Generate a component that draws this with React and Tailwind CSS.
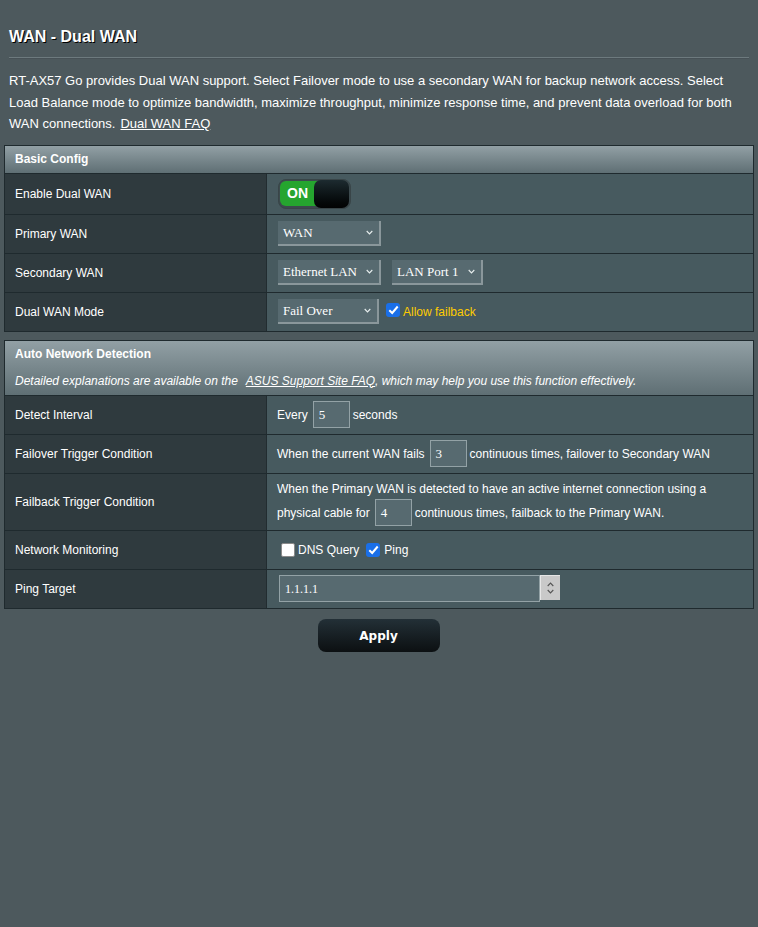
import React from "react";

const Chevron = ({ className = "", color = "#e8eeee" }) => (
  <svg width="7" height="5" viewBox="0 0 7 5" fill="none" stroke={color} strokeWidth="1.1" className={className}>
    <path d="M0.7 1 L3.5 3.9 L6.3 1" />
  </svg>
);

const Select = ({ label, width }) => (
  <div
    className={`flex h-[25px] items-center justify-between border-r-2 border-b-2 border-[#8a979b] bg-[#576a70] pl-[5px] pr-[6px] font-['Liberation_Serif',serif] text-[13px] text-white ${width}`}
  >
    <span>{label}</span>
    <Chevron />
  </div>
);

const NumBox = ({ value }) => (
  <div className="ml-[5px] mr-[3px] flex h-[27px] w-[37px] items-center border border-[#93a2a6] bg-[#576a70] pl-[5px] font-['Liberation_Serif',serif] text-[13px] text-white">
    {value}
  </div>
);

const Check = ({ checked }) =>
  checked ? (
    <div className="flex h-[14px] w-[14px] items-center justify-center rounded-[3px] bg-[#1a6fe8]">
      <svg width="11" height="10" viewBox="0 0 11 10" fill="none" stroke="#fff" strokeWidth="2">
        <path d="M1.3 5.2 L4.2 8 L9.7 1.5" />
      </svg>
    </div>
  ) : (
    <div className="h-[14px] w-[14px] rounded-[2px] border border-[#8a8a8a] bg-white" />
  );

const Row = ({ label, h = "h-[39px]", children }) => (
  <div className={`flex border-t border-[#1f2a2e] ${h}`}>
    <div className="flex w-[261px] shrink-0 items-center bg-[#2f3a3e] pl-[10px] text-[12px] text-white">
      {label}
    </div>
    <div className="flex min-w-0 flex-1 items-center border-l border-[#222c30] bg-[#475a5f] pl-[10px] text-[12px] text-white">
      {children}
    </div>
  </div>
);

const HeaderBar = ({ children }) => (
  <div className="bg-gradient-to-b from-[#92a0a5] to-[#5f6f74] pl-[10px] text-[12px] font-bold text-white">
    {children}
  </div>
);

export default function App() {
  return (
    <div className="min-h-[927px] bg-[#4d595d] font-['Liberation_Sans',sans-serif] text-white">
      <div className="px-[4px] pt-[27px]">
        <div className="px-[5px]">
          <h1 className="text-[16px] font-bold leading-[19px] [text-shadow:1px_1px_0_#000]">WAN - Dual WAN</h1>
          <div className="mt-[11px] h-[2px] w-[740px] border-t border-[#6d7a7e] bg-[#475156]" />
          <div className="mt-[11px] w-[740px] text-[13px] leading-[21.5px]">
            <div>RT-AX57 Go provides Dual WAN support. Select Failover mode to use a secondary WAN for backup network access. Select</div>
            <div>Load Balance mode to optimize bandwidth, maximize throughput, minimize response time, and prevent data overload for both</div>
            <div className="flex">
              <span>WAN connections.</span>
              <span className="ml-[5px] underline">Dual WAN FAQ</span>
            </div>
          </div>
        </div>

        <div className="mt-[10px] w-[750px] border border-[#1f2a2e]">
          <HeaderBar>
            <div className="flex h-[27px] items-center">Basic Config</div>
          </HeaderBar>
          <Row label="Enable Dual WAN" h="h-[41px]">
            <div className="ml-[1px] flex h-[30px] w-[73px] items-center rounded-[8px] border border-[#394548] bg-[#3c4a4e] p-[1px]">
              <div className="-mr-[6px] flex h-[25px] flex-1 items-center rounded-l-[6px] bg-[#25a52f] pl-[7px] text-[14px] font-bold">
                ON
              </div>
              <div className="relative h-[28px] w-[35px] rounded-[7px] bg-gradient-to-b from-[#1d2b30] to-[#020303]" />
            </div>
          </Row>
          <Row label="Primary WAN">
            <div className="ml-[1px]">
              <Select label="WAN" width="w-[103px]" />
            </div>
          </Row>
          <Row label="Secondary WAN">
            <div className="ml-[1px]">
              <Select label="Ethernet LAN" width="w-[103px]" />
            </div>
            <div className="w-[11px]" />
            <Select label="LAN Port 1" width="w-[91px]" />
          </Row>
          <Row label="Dual WAN Mode">
            <div className="ml-[1px]">
              <Select label="Fail Over" width="w-[101px]" />
            </div>
            <div className="ml-[7px] mr-[3px] -mt-[3px]">
              <Check checked />
            </div>
            <span className="text-[#ffcc00]">Allow failback</span>
          </Row>
        </div>

        <div className="mt-[8px] w-[750px] border border-[#1f2a2e]">
          <HeaderBar>
            <div className="flex h-[26px] items-center">Auto Network Detection</div>
            <div className="flex h-[28px] items-center text-[12px] font-normal italic">
              <span>Detailed explanations are available on the</span>
              <span className="ml-[8px] underline">ASUS Support Site FAQ</span>
              <span>, which may help you use this function effectively.</span>
            </div>
          </HeaderBar>
          <Row label="Detect Interval">
            Every <NumBox value="5" /> seconds
          </Row>
          <Row label="Failover Trigger Condition">
            When the current WAN fails <NumBox value="3" /> continuous times, failover to Secondary WAN
          </Row>
          <Row label="Failback Trigger Condition" h="h-[57px]">
            <div>
              <div className="-mb-[1px] pt-[2px] leading-[21px]">When the Primary WAN is detected to have an active internet connection using a</div>
              <div className="flex h-[28px] items-center">
                physical cable for <NumBox value="4" /> continuous times, failback to the Primary WAN.
              </div>
            </div>
          </Row>
          <Row label="Network Monitoring">
            <div className="ml-[4px] mr-[3px]">
              <Check />
            </div>
            DNS Query
            <div className="ml-[7px] mr-[4px]">
              <Check checked />
            </div>
            Ping
          </Row>
          <Row label="Ping Target">
            <div className="ml-[2px] flex items-start">
              <div className="flex h-[27px] w-[261px] items-center border border-[#93a2a6] bg-[#576a70] pl-[5px] font-['Liberation_Serif',serif] text-[12px] text-white">
                1.1.1.1
              </div>
              <div className="flex h-[25px] w-[20px] flex-col items-center justify-center gap-[2px] border-t border-l border-[#e6e6e6] bg-[#c9c9c9]">
                <Chevron color="#555" className="rotate-180" />
                <Chevron color="#555" />
              </div>
            </div>
          </Row>
        </div>

        <div className="mt-[10px] flex w-[750px] justify-center">
          <button className="ml-[-1px] h-[33px] w-[122px] rounded-[8px] bg-gradient-to-b from-[#233037] to-[#0c1012] pt-[2px] font-['DejaVu_Sans',sans-serif] text-[12px] font-bold text-white">
            Apply
          </button>
        </div>
      </div>
    </div>
  );
}
